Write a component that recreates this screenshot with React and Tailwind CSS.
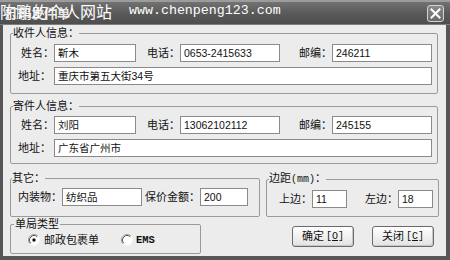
import React from "react";

function Label({ w, children, extra = "" }) {
  return (
    <div className={`${w} ${extra} shrink-0 text-right text-[11px] leading-[18px] whitespace-nowrap`}>
      {children}
    </div>
  );
}

function Field({ w, children }) {
  return (
    <div className={`${w} shrink-0 h-[18px] border border-[#8a8a8a] bg-white pl-[3px] flex items-center text-[10.5px] leading-none whitespace-nowrap overflow-hidden`}>
      {children}
    </div>
  );
}

function Radio({ checked }) {
  return (
    <svg width="12" height="12" viewBox="0 0 12 12" className="shrink-0">
      <circle cx="6" cy="6" r="5.5" fill="#ffffff" />
      <path d="M9.89 2.11 A5.5 5.5 0 0 0 2.11 9.89" stroke="#9a9a9a" strokeWidth="1" fill="none" />
      <path d="M9.18 2.82 A4.5 4.5 0 0 0 2.82 9.18" stroke="#555555" strokeWidth="1" fill="none" />
      <path d="M9.89 2.11 A5.5 5.5 0 0 1 2.11 9.89" stroke="#f4f4f4" strokeWidth="1" fill="none" />
      {checked && <circle cx="6" cy="6" r="1.7" fill="#111111" />}
    </svg>
  );
}

function Button({ label, hot }) {
  return (
    <div className="w-[62px] h-[21px] shrink-0 rounded-[3px] border border-[#6a6a6a] bg-linear-to-b from-[#ffffff] to-[#e2e2e2] shadow-[inset_-1px_-1px_0_#c8c8c8] flex items-center justify-center text-[11px] leading-none">
      <span>{label}</span>
      <span className="ml-[2px] font-['Liberation_Mono',monospace] text-[10px]">
        [<span className="underline">{hot}</span>]
      </span>
    </div>
  );
}

function PersonGroup({ title, name, phone, zip, addr, pt, pb }) {
  return (
    <fieldset className={`w-[428px] border border-[#9a9a9a] rounded-[2px] ${pt} ${pb}`}>
      <legend className="ml-[2px] text-[11px] leading-[14px]">{title}</legend>
      <div className="flex flex-col gap-[5px]">
        <div className="flex items-center">
          <Label w="w-[43px]">姓名：</Label>
          <Field w="w-[82px]">{name}</Field>
          <Label w="w-[44px]">电话：</Label>
          <Field w="w-[100px]">{phone}</Field>
          <Label w="w-[52px]">邮编：</Label>
          <Field w="w-[100px]">{zip}</Field>
        </div>
        <div className="flex items-center">
          <Label w="w-[43px]" extra="pr-[3px]">地址：</Label>
          <Field w="w-[378px]">{addr}</Field>
        </div>
      </div>
    </fieldset>
  );
}

export default function App() {
  return (
    <div className="w-[450px] h-[260px] bg-[#565656] flex flex-col overflow-hidden font-['Liberation_Sans','Noto_Sans_CJK_SC',sans-serif] text-[#111111]">
      {/* Title bar */}
      <div className="relative h-[25px] shrink-0 flex items-center justify-between bg-linear-to-b from-[#727272] via-[#5a5a5a] to-[#4e4e4e] border-t-2 border-t-[#9c9c9c] border-b border-b-[#7e7e7e]">
        <div className="pl-[5px] text-[13px] font-bold leading-none text-[#e8e8e8]">打印发件单</div>
        <div className="mr-[6px] w-[17px] h-[17px] rounded-[3px] border border-[#d4d4d4] bg-linear-to-b from-[#8a8a8a] to-[#6a6a6a] flex items-center justify-center">
          <svg width="11" height="11" viewBox="0 0 11 11">
            <path d="M1.5 1.5 L9.5 9.5 M9.5 1.5 L1.5 9.5" stroke="#ffffff" strokeWidth="2" strokeLinecap="square" />
          </svg>
        </div>
        {/* watermark overlay */}
        <div className="absolute left-0 top-[-1px] flex items-center pointer-events-none">
          <span className="text-[16px] leading-[20px] text-white font-['Noto_Sans_CJK_SC',sans-serif]">陈鹏的个人网站</span>
          <span className="ml-[17px] text-[13.3px] leading-[20px] text-white font-['Liberation_Mono',monospace]">www.chenpeng123.com</span>
        </div>
      </div>

      {/* Body */}
      <div className="flex-1 ml-[3px] mr-[4px] mb-[4px] bg-[#ececec] pl-[7px] pt-[1px] flex flex-col">
        <PersonGroup
          title="收件人信息："
          name="靳木"
          phone="0653-2415633"
          zip="246211"
          addr="重庆市第五大街34号"
          pt="pt-[4px]"
          pb="pb-[8px]"
        />
        <div className="mt-[5px]">
          <PersonGroup
            title="寄件人信息："
            name="刘阳"
            phone="13062102112"
            zip="245155"
            addr="广东省广州市"
            pt="pt-[3px]"
            pb="pb-[6px]"
          />
        </div>

        <div className="mt-[7px] flex gap-[6px]">
          <fieldset className="w-[250px] border border-[#9a9a9a] rounded-[2px] pt-[3px] pb-[8px]">
            <legend className="ml-[1px] text-[11px] leading-[14px]">其它：</legend>
            <div className="flex items-center">
              <Label w="w-[51px]">内装物：</Label>
              <Field w="w-[80px]">纺织品</Field>
              <Label w="w-[58px]">保价金额：</Label>
              <Field w="w-[48px]">200</Field>
            </div>
          </fieldset>
          <fieldset className="w-[173px] border border-[#9a9a9a] rounded-[2px] pt-[3px] pb-[8px]">
            <legend className="ml-[2px] text-[11px] leading-[14px]">
              边距<span className="font-['Liberation_Mono',monospace] text-[10px]">(mm)</span>：
            </legend>
            <div className="flex items-center">
              <Label w="w-[45px]">上边：</Label>
              <Field w="w-[35px]">11</Field>
              <Label w="w-[51px]">左边：</Label>
              <Field w="w-[35px]">18</Field>
            </div>
          </fieldset>
        </div>

        <div className="flex items-start">
          <fieldset className="w-[191px] border border-[#9a9a9a] rounded-[2px] pt-[1px] pb-[5px]">
            <legend className="ml-[3px] px-[1px] text-[11px] leading-[14px]">单局类型</legend>
            <div className="h-[16px] flex items-center pl-[17px]">
              <Radio checked />
              <span className="ml-[4px] text-[11px] leading-none">邮政包裹单</span>
              <span className="ml-[22px]"><Radio /></span>
              <span className="ml-[3px] text-[10.5px] leading-none font-['Liberation_Mono',monospace] font-bold">EMS</span>
            </div>
          </fieldset>
          <div className="ml-[91px] mt-[9px] flex gap-[18px]">
            <Button label="确定" hot="O" />
            <Button label="关闭" hot="C" />
          </div>
        </div>
      </div>
    </div>
  );
}
